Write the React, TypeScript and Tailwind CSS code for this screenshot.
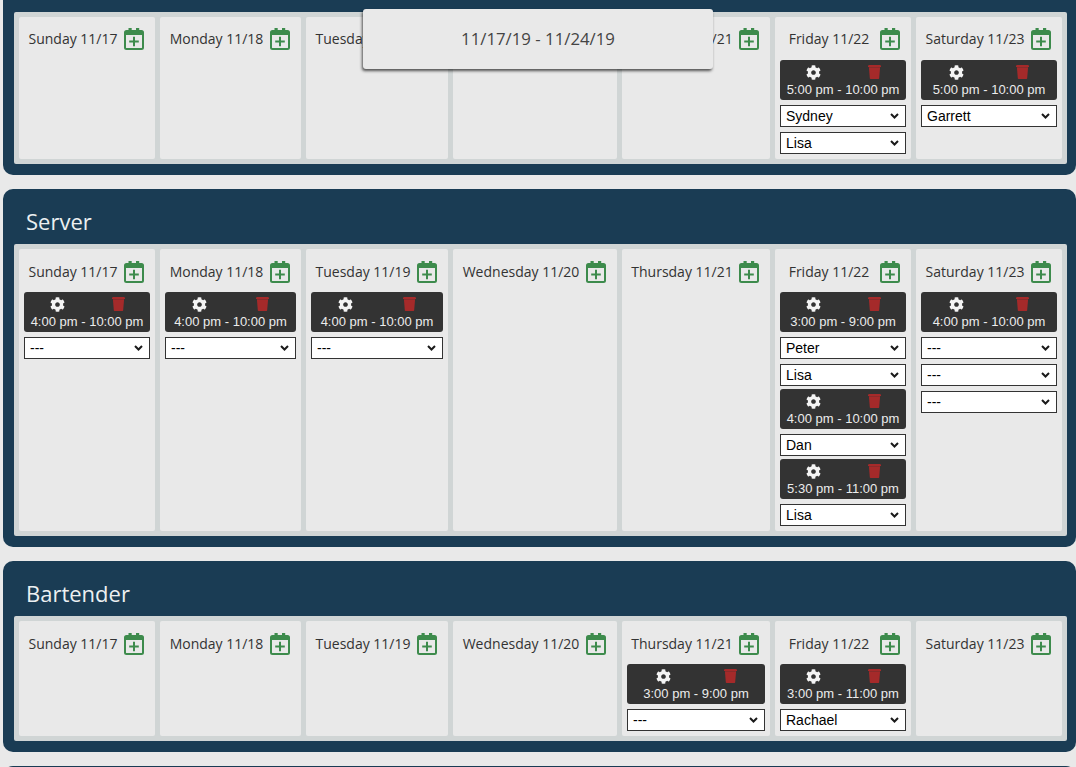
import { FaCog } from "react-icons/fa";

type Shift = { time: string; people: string[] };
type Day = { label: string; shifts?: Shift[] };

const CalendarPlus = () => (
  <svg width="20" height="22" viewBox="0 0 20 22" className="shrink-0" fill="none">
    <rect x="4.5" y="0" width="3.2" height="4" fill="#3d8b4c" />
    <rect x="12" y="0" width="3.2" height="4" fill="#3d8b4c" />
    <rect x="1" y="3" width="18" height="18" rx="1.5" stroke="#3d8b4c" strokeWidth="2" />
    <rect x="1" y="3" width="18" height="4" fill="#3d8b4c" />
    <path d="M5.2 13.5h9.6M10 8.7v9.6" stroke="#3d8b4c" strokeWidth="2" />
  </svg>
);

const Trash = () => (
  <svg width="13" height="14" viewBox="0 0 13 14" fill="#a52a2a">
    <path d="M1 0h11l1 .8v1.2H0V.8z" />
    <path d="M.9 2.3h11.2l-.9 10.7c0 .6-.4 1-1 1H2.8c-.6 0-1-.4-1-1z" />
  </svg>
);

const ShiftCard = ({ shift }: { shift: Shift }) => (
  <div className="flex flex-col">
    <div className="h-10 rounded-[3px] bg-[#333333] flex flex-col">
      <div className="flex pt-[5px] h-[19px]">
        <div className="w-1/2 flex justify-center pl-[3px]">
          <FaCog size={15} color="#f4f4f4" />
        </div>
        <div className="w-1/2 flex justify-center pr-[1px]">
          <Trash />
        </div>
      </div>
      <div className="text-center text-[13px] leading-[15px] text-[#ececec] font-['Liberation_Sans',sans-serif] mt-[3px]">
        {shift.time}
      </div>
    </div>
    {shift.people.map((p, i) => (
      <div key={i} className="relative mt-[5px] h-[22px]">
        <select
          defaultValue={p}
          className="appearance-none block h-[22px] w-full bg-white border border-[#333333] text-black text-[14px] font-['Liberation_Sans',sans-serif] pl-[5px]"
        >
          <option value={p}>{p}</option>
        </select>
        <svg
          width="9"
          height="6"
          viewBox="0 0 9 6"
          fill="none"
          className="absolute right-[7px] top-[8px] pointer-events-none"
        >
          <path d="M1 1l3.5 3.5L8 1" stroke="#1a1a1a" strokeWidth="2" />
        </svg>
      </div>
    ))}
  </div>
);

const DayCell = ({ day, lower }: { day: Day; lower: boolean }) => (
  <div className="rounded-[2px] bg-[#e9e9e9] px-[5px] pb-[5px]">
    <div className={lower ? "h-[43px] pt-[2px] -mx-[5px] pr-[11px] flex items-center" : "h-[43px] -mx-[5px] pr-[11px] flex items-center"}>
      <div className="flex-1 text-center pl-[3px] text-[14px] text-[#333333] whitespace-nowrap">{day.label}</div>
      <CalendarPlus />
    </div>
    <div className="flex flex-col gap-[3px]">
      {(day.shifts ?? []).map((s, i) => (
        <ShiftCard key={i} shift={s} />
      ))}
    </div>
  </div>
);

const Board = ({ days, lower = false }: { days: Day[]; lower?: boolean }) => (
  <div className="rounded-[2px] bg-[#d0d5d5] p-[5px] ml-[11px] mr-[9px] grid grid-cols-[136px_141px_142px_164px_148px_136px_146px] gap-[5px]">
    {days.map((d) => (
      <DayCell key={d.label} day={d} lower={lower} />
    ))}
  </div>
);

const names = ["Sunday 11/17", "Monday 11/18", "Tuesday 11/19", "Wednesday 11/20", "Thursday 11/21", "Friday 11/22", "Saturday 11/23"];
const make = (s: Record<number, Shift[]>): Day[] => names.map((label, i) => ({ label, shifts: s[i] }));

const first = make({
  5: [{ time: "5:00 pm - 10:00 pm", people: ["Sydney", "Lisa"] }],
  6: [{ time: "5:00 pm - 10:00 pm", people: ["Garrett"] }],
});
const server = make({
  0: [{ time: "4:00 pm - 10:00 pm", people: ["---"] }],
  1: [{ time: "4:00 pm - 10:00 pm", people: ["---"] }],
  2: [{ time: "4:00 pm - 10:00 pm", people: ["---"] }],
  5: [
    { time: "3:00 pm - 9:00 pm", people: ["Peter", "Lisa"] },
    { time: "4:00 pm - 10:00 pm", people: ["Dan"] },
    { time: "5:30 pm - 11:00 pm", people: ["Lisa"] },
  ],
  6: [{ time: "4:00 pm - 10:00 pm", people: ["---", "---", "---"] }],
});
const bartender = make({
  4: [{ time: "3:00 pm - 9:00 pm", people: ["---"] }],
  5: [{ time: "3:00 pm - 11:00 pm", people: ["Rachael"] }],
});

const Title = ({ children }: { children: string }) => (
  <div className="h-[55px] pl-[23px] pt-[18px] text-[22px] leading-[28px] text-[#ecf0f1]">{children}</div>
);

export default function App() {
  return (
    <div className="relative h-[767px] w-[1076px] overflow-hidden bg-[#e9e9e9] pl-[3px] font-['Open_Sans',sans-serif]">
      <div className="flex flex-col gap-[14px]">
        <section className="bg-[#1a3c54] rounded-b-[10px] pt-3 pb-[11px]">
          <Board days={first} />
        </section>
        <section className="bg-[#1a3c54] rounded-[10px] pb-[11px]">
          <Title>Server</Title>
          <Board days={server} lower />
        </section>
        <section className="bg-[#1a3c54] rounded-[10px] pb-[11px]">
          <Title>Bartender</Title>
          <Board days={bartender} lower />
        </section>
        <section className="bg-[#1a3c54] rounded-t-[10px] h-10" />
      </div>
      <div className="absolute left-[363px] top-[9px] w-[350px] h-[60px] rounded-[3px] bg-[#e9e9e9] shadow-[-1px_2px_3px_rgba(0,0,0,0.65)] flex items-center justify-center text-[16.8px] text-[#444444]">
        11/17/19 - 11/24/19
      </div>
    </div>
  );
}
